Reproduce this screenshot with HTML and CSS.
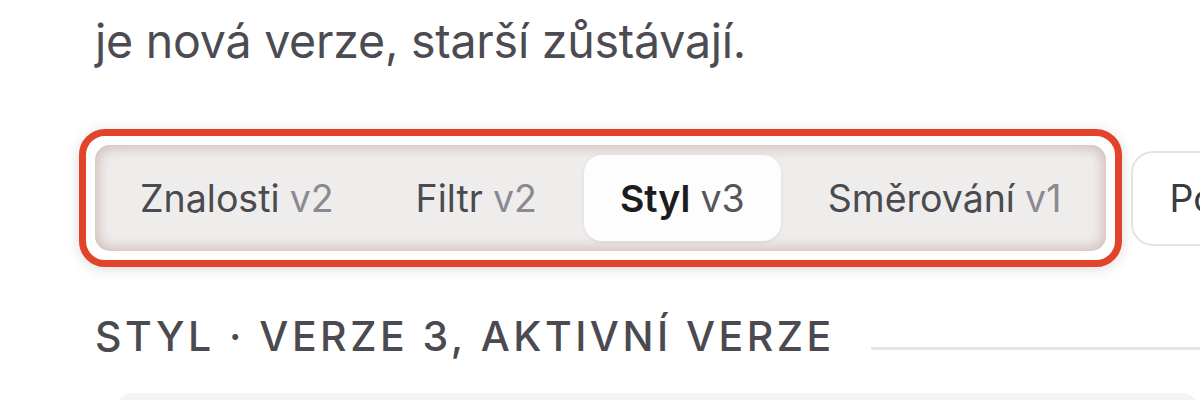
FILE: index.html
```html
<!DOCTYPE html>
<html lang="cs">
<head>
<meta charset="utf-8">
<link rel="stylesheet" href="styles.css">
</head>
<body>
<main class="page">
  <p class="lead">je nová verze, starší zůstávají.</p>
  <div class="tabrow">
    <div class="highlight">
      <div class="tabs">
        <div class="tab"><span class="name">Znalosti</span> <span class="ver">v2</span></div>
        <div class="tab"><span class="name">Filtr</span> <span class="ver">v2</span></div>
        <div class="tab active"><span class="name">Styl</span> <span class="ver">v3</span></div>
        <div class="tab"><span class="name">Směrování</span> <span class="ver">v1</span></div>
      </div>
    </div>
    <button class="btn">Porovnat</button>
  </div>
  <div class="section-head">
    <h2 class="label">Styl · verze 3, aktivní verze</h2>
    <div class="rule"></div>
  </div>
  <div class="panel"></div>
</main>
</body>
</html>
```
FILE: styles.css
```css
* { box-sizing: border-box; }
html, body { margin: 0; padding: 0; background: #fff; overflow: hidden; }
body { font-family: Inter, "Noto Sans", sans-serif; color: #4a4a50; width: 1200px; height: 400px; }
.page { padding-left: 95px; }
.lead { margin: 0; padding-top: 13px; font-size: 46.5px; line-height: 56px; color: #4b4b51; white-space: nowrap; letter-spacing: -0.005em; }
.tabrow { display: flex; align-items: center; gap: 9px; margin-top: 60px; margin-left: -16px; width: max-content; }
.highlight { border: 7px solid #e1442b; border-radius: 26px; padding: 9px; background: #fff; box-shadow: 0 2px 14px rgba(0,0,0,0.14); }
.tabs { display: flex; gap: 12px; padding: 10px; border-radius: 15px; background: #efedec; box-shadow: inset 0 0 14px 2px rgba(165,115,105,0.45); }
.tab { padding: 0 35px; height: 86px; display: flex; align-items: center; gap: 0.27em; font-size: 37.5px; white-space: nowrap; border-radius: 18px; color: #4a4a50; }
.tab .ver { color: #8a8a90; }
.tab.active { background: #fdfdfd; box-shadow: 0 1px 4px rgba(0,0,0,0.08); padding: 0 36px; }
.tab.active .name { color: #1b1b20; font-weight: 600; }
.tab.active .ver { color: #55555b; }
.btn { font-family: inherit; font-size: 37.5px; color: #3a3a40; background: #fff; border: 2px solid #e3e3e0; border-radius: 22px; height: 95px; padding: 0 36px; white-space: nowrap; }
.section-head { display: flex; align-items: flex-end; gap: 36px; margin-top: 48px; }
.label { margin: 0; font-size: 41px; font-weight: 500; text-transform: uppercase; letter-spacing: 0.085em; color: #4a4a50; line-height: 42px; white-space: nowrap; }
.rule { flex: 1; height: 3px; background: #e6e6e2; margin-bottom: 7px; }
.panel { margin-top: 36px; margin-left: 20px; height: 60px; background: #f4f4f2; border-radius: 18px; }
```
